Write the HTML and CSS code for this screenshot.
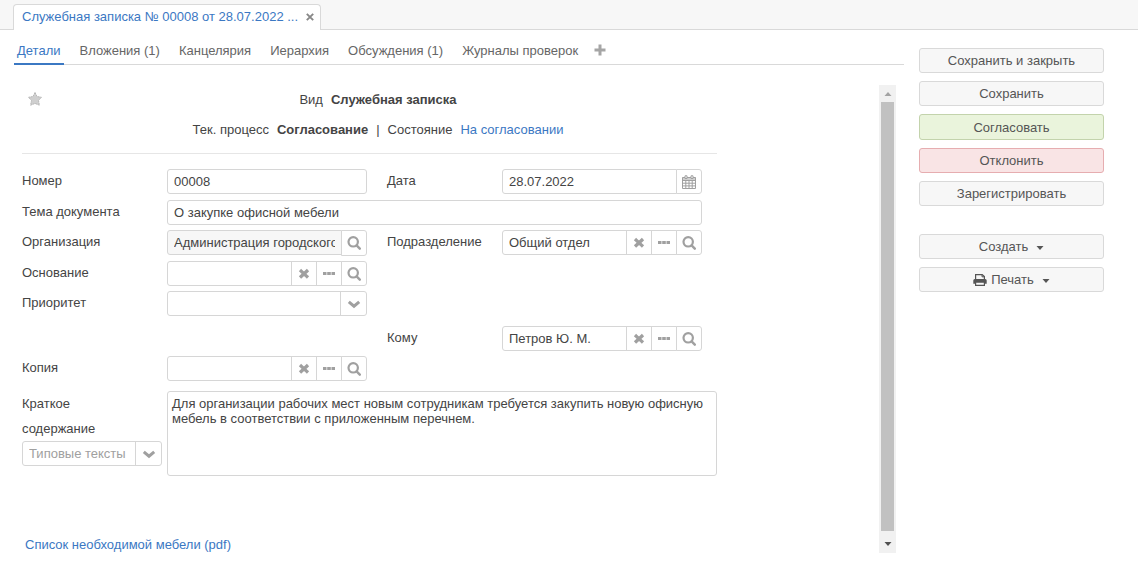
FILE: index.html
```html
<!DOCTYPE html>
<html lang="ru">
<head>
<meta charset="utf-8">
<title>Служебная записка № 00008</title>
<link rel="stylesheet" href="styles.css">
</head>
<body>
<svg class="sprite" aria-hidden="true">
  <symbol id="search" viewBox="0 0 14 14"><circle cx="6.2" cy="5.800" r="4.700" fill="none" stroke="currentColor" stroke-width="2.200"/><path d="M9.600 9.400l3.200 3.300" stroke="currentColor" stroke-width="2.400" stroke-linecap="round"/></symbol>
  <symbol id="clear" viewBox="0 0 14 14"><path d="M4.200 4.200l5.600 5.200M9.800 4.200L4.200 9.400" stroke="currentColor" stroke-width="3.300" stroke-linecap="square"/></symbol>
  <symbol id="dots" viewBox="0 0 14 14"><path d="M1 5h3.500v3H1zM5.200 5h3.600v3H5.200zM9.500 5H13v3H9.500z" fill="currentColor"/></symbol>
  <symbol id="chevron" viewBox="0 0 14 14"><path d="M1.800 4.800L7 9.200l5.200-4.400" fill="none" stroke="currentColor" stroke-width="3"/></symbol>
  <symbol id="calendar" viewBox="0 0 14 14"><path d="M.5 2.500h13v11H.5zM.5 5.500h13M.5 8.200h13M.5 10.900h13M3.800 5v8.500M7 5v8.500M10.200 5v8.500" fill="none" stroke="currentColor"/><path d="M.5 2h13v3H.5z" fill="currentColor" opacity=".5"/><path d="M3 .8h2v2.700H3zM9 .8h2v2.700H9z" fill="#fff" stroke="currentColor"/></symbol>
  <symbol id="star" viewBox="0 0 14 14"><path d="M7 .5l2 4 4.500.8-3 3.200.9 4.700L7 11.400l-4.400 1.800.9-4.700-3-3.200L5 4.500z" fill="#cfcfcf" stroke="#b8b8b8" stroke-dasharray="2 .6"/></symbol>
  <symbol id="plus" viewBox="0 0 12 12"><path d="M6 .5v11M.5 6h11" stroke="currentColor" stroke-width="3"/></symbol>
  <symbol id="close" viewBox="0 0 8 8"><path d="M.8.8l6.400 6.400M7.200.8L.8 7.200" stroke="currentColor" stroke-width="1.900"/></symbol>
  <symbol id="printer" viewBox="0 0 14 14"><path d="M2.600 6.500V1.600h6.600l2.200 2v2.900" fill="none" stroke="currentColor" stroke-width="1.200"/><path d="M9 1.500v2.300h2.400" fill="none" stroke="currentColor"/><path d="M1.800 6h10.400a1.500 1.500 0 0 1 1.500 1.500v3.300h-2.300V9.300H2.600v1.500H.3V7.500A1.500 1.500 0 0 1 1.800 6z" fill="currentColor"/><path d="M2.600 9.200h8.800v3.200H2.600z" fill="#f7f7f7" stroke="currentColor" stroke-width="1.200"/></symbol>
  <symbol id="caret" viewBox="0 0 8 4"><path d="M.5 0h7L4 4z" fill="currentColor"/></symbol>
</svg>

<header class="windows">
  <div class="window-tab">
    <a href="#doc">Служебная записка № 00008 от 28.07.2022 ...</a>
    <button class="plain" type="button" aria-label="Закрыть"><svg class="icon-8"><use href="#close"/></svg></button>
  </div>
</header>

<div class="layout">
  <main class="document">
    <nav class="tabs">
      <a class="tab tab-active" href="#details">Детали</a>
      <a class="tab" href="#files">Вложения (1)</a>
      <a class="tab" href="#office">Канцелярия</a>
      <a class="tab" href="#tree">Иерархия</a>
      <a class="tab" href="#talks">Обсуждения (1)</a>
      <a class="tab" href="#logs">Журналы проверок</a>
      <button class="plain" type="button" aria-label="Добавить"><svg class="icon-12"><use href="#plus"/></svg></button>
    </nav>

    <div class="pane">
      <form class="form">
        <div class="summary">
          <button class="plain star" type="button" aria-label="В избранное"><svg class="icon"><use href="#star"/></svg></button>
          <div class="summary-text">
            <div class="summary-line"><span>Вид</span><b>Служебная записка</b></div>
            <div class="summary-line"><span>Тек. процесс</span><b>Согласование</b><span>|</span><span>Состояние</span><a href="#state">На согласовании</a></div>
          </div>
        </div>

        <div class="row row-tall">
          <label for="number">Номер</label>
          <div class="group"><input id="number" type="text" value="00008"></div>
          <label class="second" for="date">Дата</label>
          <div class="group"><input id="date" type="text" value="28.07.2022"><button type="button" aria-label="Календарь"><svg class="icon"><use href="#calendar"/></svg></button></div>
        </div>
        <div class="row">
          <label for="subject">Тема документа</label>
          <div class="group wide"><input id="subject" type="text" value="О закупке офисной мебели"></div>
        </div>
        <div class="row row-tall">
          <label for="org">Организация</label>
          <div class="group"><input id="org" class="locked" type="text" value="Администрация городского округа" readonly><button class="tall" type="button" aria-label="Найти"><svg class="icon"><use href="#search"/></svg></button></div>
          <label class="second" for="dept">Подразделение</label>
          <div class="group"><input id="dept" type="text" value="Общий отдел"><button type="button" aria-label="Очистить"><svg class="icon"><use href="#clear"/></svg></button><button type="button" aria-label="Выбрать"><svg class="icon"><use href="#dots"/></svg></button><button type="button" aria-label="Найти"><svg class="icon"><use href="#search"/></svg></button></div>
        </div>
        <div class="row">
          <label for="basis">Основание</label>
          <div class="group"><input id="basis" type="text"><button type="button" aria-label="Очистить"><svg class="icon"><use href="#clear"/></svg></button><button type="button" aria-label="Выбрать"><svg class="icon"><use href="#dots"/></svg></button><button type="button" aria-label="Найти"><svg class="icon"><use href="#search"/></svg></button></div>
        </div>
        <div class="row row-spaced">
          <label for="priority">Приоритет</label>
          <div class="picker"><select id="priority"><option></option></select><span class="picker-icon"><svg class="icon"><use href="#chevron"/></svg></span></div>
        </div>
        <div class="row">
          <label class="second" for="to">Кому</label>
          <div class="group"><input id="to" type="text" value="Петров Ю. М."><button type="button" aria-label="Очистить"><svg class="icon"><use href="#clear"/></svg></button><button type="button" aria-label="Выбрать"><svg class="icon"><use href="#dots"/></svg></button><button type="button" aria-label="Найти"><svg class="icon"><use href="#search"/></svg></button></div>
        </div>
        <div class="row row-spaced">
          <label for="copy">Копия</label>
          <div class="group"><input id="copy" type="text"><button type="button" aria-label="Очистить"><svg class="icon"><use href="#clear"/></svg></button><button type="button" aria-label="Выбрать"><svg class="icon"><use href="#dots"/></svg></button><button type="button" aria-label="Найти"><svg class="icon"><use href="#search"/></svg></button></div>
        </div>
        <div class="row row-text">
          <div class="text-side">
            <label for="content">Краткое содержание</label>
            <div class="picker picker-muted"><select aria-label="Типовые тексты"><option>Типовые тексты</option></select><span class="picker-icon"><svg class="icon"><use href="#chevron"/></svg></span></div>
          </div>
          <textarea id="content" rows="5">Для организации рабочих мест новым сотрудникам требуется закупить новую офисную мебель в соответствии с приложенным перечнем.</textarea>
        </div>
        <a class="attachment" href="#pdf">Список необходимой мебели (pdf)</a>
      </form>

      <div class="scrollbar" aria-hidden="true">
        <span class="scroll-arrow"><svg class="caret up"><use href="#caret"/></svg></span>
        <span class="scroll-thumb"></span>
        <span class="scroll-arrow scroll-down"><svg class="caret"><use href="#caret"/></svg></span>
      </div>
    </div>
  </main>

  <aside class="actions">
    <button class="action" type="button">Сохранить и закрыть</button>
    <button class="action" type="button">Сохранить</button>
    <button class="action approve" type="button">Согласовать</button>
    <button class="action reject" type="button">Отклонить</button>
    <button class="action" type="button">Зарегистрировать</button>
    <button class="action action-menu" type="button">Создать<svg class="caret menu-caret"><use href="#caret"/></svg></button>
    <button class="action" type="button"><svg class="icon printer"><use href="#printer"/></svg>Печать<svg class="caret menu-caret"><use href="#caret"/></svg></button>
  </aside>
</div>
</body>
</html>
```
FILE: styles.css
```css
* { box-sizing: border-box; }

body {
  margin: 0;
  min-height: 100vh;
  display: flex;
  flex-direction: column;
  background: #fff;
  color: #444;
  font: 13px/15px "Liberation Sans", Arial, sans-serif;
}

a { color: #3b78c3; text-decoration: none; }
button, input, select, textarea { font: inherit; color: inherit; margin: 0; }
svg { display: block; flex: none; }

.sprite { position: absolute; width: 0; height: 0; }
.icon { width: 14px; height: 14px; }
.icon-12 { width: 12px; height: 12px; }
.icon-8 { width: 8px; height: 8px; }
.caret { width: 8px; height: 4px; }
.plain { padding: 0; border: 0; background: none; color: #a5a5a5; }

/* Open windows */
.windows {
  display: flex;
  height: 30px;
  padding: 4px 13px 0;
  background: #f7f7f7;
  border-bottom: 1px solid #d9d9d9;
}
.window-tab {
  display: flex;
  align-items: center;
  gap: 8px;
  height: 26px;
  padding: 0 6px 2px 8px;
  background: #fff;
  border: 1px solid #d9d9d9;
  border-bottom: 0;
  border-radius: 4px 4px 0 0;
}
.window-tab .plain { color: #888; }

.layout {
  flex: 1;
  display: flex;
  gap: 15px;
  padding: 0 34px 8px 14px;
}
.document { flex: 1; min-width: 0; display: flex; flex-direction: column; }

/* Document sections */
.tabs {
  display: flex;
  gap: 13px;
  height: 35px;
  border-bottom: 1px solid #d9d9d9;
}
.tab {
  height: 35px;
  padding: 13px 3px 0;
  color: #666;
}
.tab-active { color: #3b78c3; border-bottom: 2px solid #3b78c3; }
.tabs .plain { align-self: center; padding-top: 6px; }

.pane {
  flex: 1;
  display: flex;
  justify-content: space-between;
  margin: 20px 8px 0;
}

/* Form */
.form { display: flex; flex-direction: column; gap: 5px; width: 695px; }
.summary {
  display: flex;
  height: 69px;
  margin-bottom: 10px;
  padding: 7px 3px 0 6px;
  border-bottom: 1px solid #e6e6e6;
}
.star { align-self: flex-start; }
.summary-text { flex: 1; display: flex; flex-direction: column; gap: 15px; }
.summary-line { display: flex; justify-content: center; gap: 8px; }

.row {
  display: grid;
  grid-template-columns: 145px 200px 20px 115px 200px;
  align-items: start;
}
.row-tall { min-height: 26px; }
.row-spaced { margin-bottom: 5px; }
.row-text { grid-template-columns: 145px 1fr; }
label { line-height: 24px; }
.second { grid-column: 4; }
.wide { grid-column: 2 / -1; }

.group { display: flex; align-items: flex-start; }
.group input {
  flex: 1;
  min-width: 0;
  height: 25px;
  padding: 0 6px;
  border: 1px solid #d6d6d6;
  border-radius: 3px;
  background: #fff;
}
.group .locked { background: #f7f7f7; }
.group input:not(:last-child) { border-radius: 3px 0 0 3px; }
.group button {
  display: flex;
  align-items: center;
  justify-content: center;
  width: 26px;
  height: 25px;
  margin-left: -1px;
  padding: 0;
  border: 1px solid #d6d6d6;
  background: #fff;
  color: #a0a0a0;
}
.group button:last-child { border-radius: 0 3px 3px 0; }
.group .tall { height: 26px; }

.picker { display: grid; grid-template-columns: 1fr 26px; height: 25px; border: 1px solid #d6d6d6; border-radius: 3px; }
.picker select {
  grid-area: 1 / 1 / 2 / 3;
  appearance: none;
  padding: 0 6px;
  border: 0;
  background: none;
}
.picker-icon {
  grid-area: 1 / 2;
  display: flex;
  align-items: center;
  justify-content: center;
  border-left: 1px solid #d6d6d6;
  color: #a0a0a0;
  pointer-events: none;
}
.picker-muted { color: #a0a0a0; }

.text-side { display: flex; flex-direction: column; padding-right: 5px; }
.text-side label { width: 100px; line-height: 25px; }
textarea {
  height: 85px;
  padding: 4px;
  border: 1px solid #d6d6d6;
  border-radius: 3px;
  resize: none;
}
.attachment { align-self: flex-start; margin: 56px 3px 0; }

/* Scrollbar */
.scrollbar {
  display: flex;
  flex-direction: column;
  width: 17px;
  padding: 0 2px;
  background: #f1f1f1;
}
.scroll-arrow {
  display: flex;
  align-items: center;
  justify-content: center;
  height: 17px;
  color: #a3a3a3;
}
.scroll-thumb { flex: 1; background: #c1c1c1; }
.scroll-down { height: 22px; padding-top: 4px; color: #505050; }
.up { transform: rotate(180deg); }

/* Actions */
.actions {
  display: flex;
  flex-direction: column;
  gap: 8px;
  width: 185px;
  padding-top: 18px;
  color: #555;
}
.action {
  display: flex;
  align-items: center;
  justify-content: center;
  height: 25px;
  padding: 0;
  border: 1px solid #d9d9d9;
  border-radius: 3px;
  background: #f7f7f7;
}
.approve { height: 26px; background: #eaf4dc; border-color: #c3d3ac; }
.reject { background: #f9e4e5; border-color: #e6adb0; }
.action-menu { margin-top: 20px; }
.menu-caret { margin: 3px 0 0 8px; }
.printer { margin-right: 4px; }
```
